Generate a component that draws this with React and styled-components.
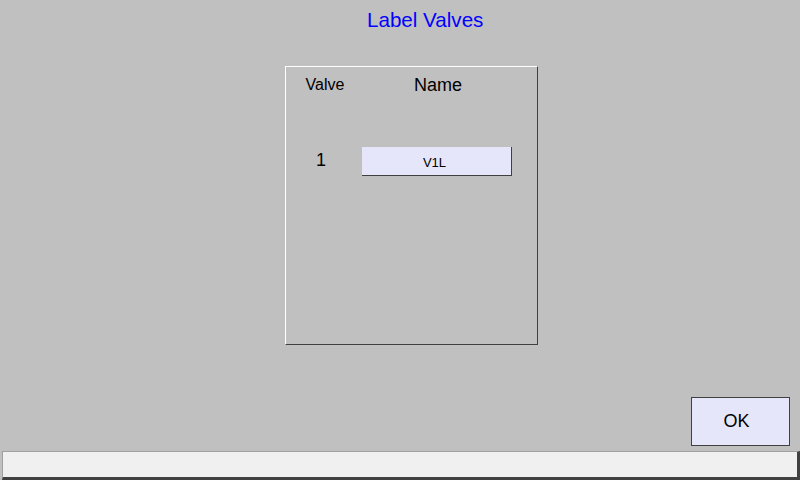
import React from 'react'
import styled, { createGlobalStyle } from 'styled-components'

const GlobalStyle = createGlobalStyle`
    html, body {
        margin: 0;
        padding: 0;
        background: #c0c0c0;
    }
    body {
        font-family: "Liberation Sans", Arial, sans-serif;
    }
`

const valves = [{ id: 1, name: 'V1L' }]

function App() {
    return (
        <Page>
            <GlobalStyle />
            <Header>
                <Title>Label Valves</Title>
            </Header>
            <Main>
                <Panel>
                    <HeaderCell size={16} shift={1}>Valve</HeaderCell>
                    <HeaderCell size={18} shift={1}>Name</HeaderCell>
                    {valves.map(v => (
                        <React.Fragment key={v.id}>
                            <Number>{v.id}</Number>
                            <NameBox>{v.name}</NameBox>
                        </React.Fragment>
                    ))}
                </Panel>
            </Main>
            <Footer>
                <OkButton>OK</OkButton>
            </Footer>
            <StatusBar />
        </Page>
    )
}

export default App

const Page = styled.div`
    width: 800px;
    height: 480px;
    display: flex;
    flex-direction: column;
    background: #c0c0c0;
    overflow: hidden;
`

const Header = styled.div`
    height: 66px;
    box-sizing: border-box;
    padding-top: 8px;
    padding-left: 367px;
`

const Title = styled.div`
    color: #0000ff;
    font-size: 20.6px;
    line-height: 24px;
`

const Main = styled.div`
    height: 331px;
    padding-left: 285px;
`

const Panel = styled.div`
    width: 253px;
    height: 279px;
    box-sizing: border-box;
    border-top: 1px solid #ffffff;
    border-left: 1px solid #ffffff;
    border-right: 1px solid #404040;
    border-bottom: 1px solid #404040;
    display: grid;
    grid-template-columns: 76px 150px;
    grid-auto-rows: min-content;
    align-items: start;
    align-content: start;
    padding-top: 7px;
    row-gap: 52px;
`

const HeaderCell = styled.div`
    text-align: center;
    font-size: ${p => p.size}px;
    line-height: 20px;
    padding-top: ${p => p.shift || 0}px;
    padding-left: 2px;
    color: #000;
`

const Number = styled.div`
    align-self: center;
    text-align: center;
    font-size: 18px;
    line-height: 20px;
    padding-right: 6px;
    padding-bottom: 3px;
    color: #000;
`

const NameBox = styled.div`
    align-self: center;
    height: 29px;
    box-sizing: border-box;
    background: #e6e6fa;
    border-right: 1px solid #404040;
    border-bottom: 1px solid #404040;
    display: flex;
    align-items: center;
    justify-content: center;
    padding-top: 3px;
    padding-right: 4px;
    font-size: 13px;
    color: #000;
`

const Footer = styled.div`
    display: flex;
    justify-content: flex-end;
    padding-right: 10px;
    height: 54px;
`

const OkButton = styled.div`
    width: 99px;
    height: 49px;
    box-sizing: border-box;
    background: #e6e6fa;
    border: 1px solid #404040;
    display: flex;
    align-items: center;
    justify-content: center;
    padding-right: 8px;
    font-size: 18px;
    color: #000;
`

const StatusBar = styled.div`
    margin-left: 2px;
    height: 29px;
    box-sizing: border-box;
    background: #f0f0f0;
    border-top: 1px solid #a0a0a0;
    border-left: 1px solid #a0a0a0;
    border-right: 3px solid #404040;
    border-bottom: 3px solid #404040;
`
